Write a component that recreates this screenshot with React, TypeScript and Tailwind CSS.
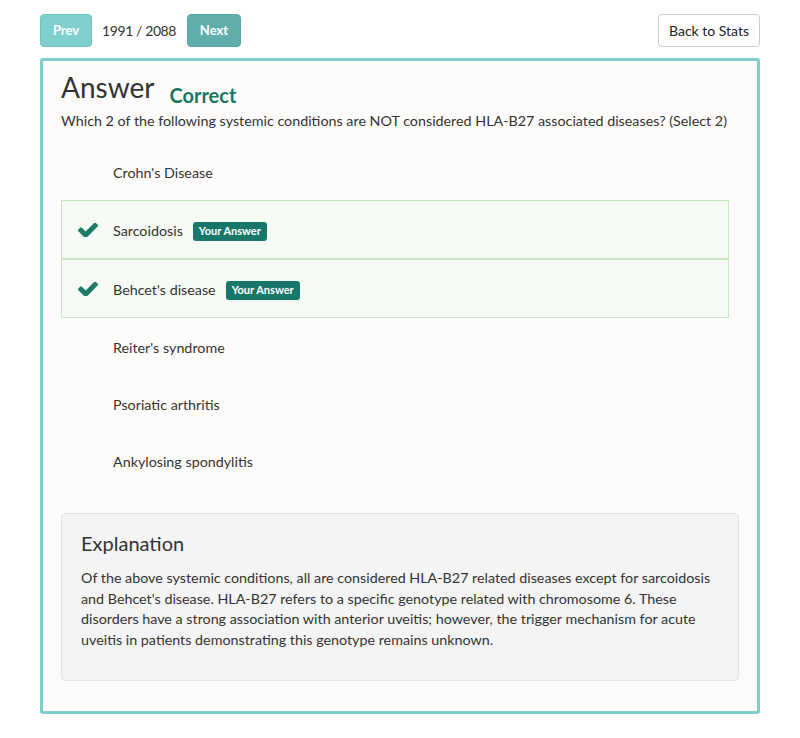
const options = [
  { text: "Crohn's Disease", picked: false },
  { text: 'Sarcoidosis', picked: true },
  { text: "Behcet's disease", picked: true },
  { text: "Reiter's syndrome", picked: false },
  { text: 'Psoriatic arthritis', picked: false },
  { text: 'Ankylosing spondylitis', picked: false },
];

function CheckMark() {
  return (
    <svg width="20" height="14" viewBox="121 374 1550 1052" className="fill-[#1d7a66]">
      <path d="M1671 566q0 40-28 68l-724 724-136 136q-28 28-68 28t-68-28l-136-136-362-362q-28-28-28-68t28-68l136-136q28-28 68-28t68 28l294 295 656-657q28-28 68-28t68 28l136 136q28 28 28 68z" />
    </svg>
  );
}

function OptionRow({ text, picked }: { text: string; picked: boolean }) {
  return (
    <div
      className={
        picked
          ? 'flex h-[59px] items-center border border-[#c9e6c3] bg-[#f5faf4]'
          : 'flex h-[57px] items-center border border-transparent'
      }
    >
      <div className="flex w-[51px] shrink-0 justify-start pl-[16px]">{picked && <CheckMark />}</div>
      <span className="pt-[3px] text-[14.3px] text-[#333]">{text}</span>
      {picked && (
        <span className="ml-[10px] mt-[3px] flex h-[19px] items-center rounded-[3px] bg-[#17786a] px-[6px] text-[11px] font-bold text-white">
          Your Answer
        </span>
      )}
    </div>
  );
}

export default function App() {
  return (
    <div
      className="min-h-[738px] bg-white px-[40px] pt-[14px] text-[#333]"
      style={{ fontFamily: 'Lato, "Open Sans", sans-serif' }}
    >
      <div className="flex h-[33px] items-center">
        <button className="h-[33px] w-[52px] rounded-[4px] border border-[#71c4c0] bg-[#7fd0cc] text-[13px] font-bold text-white">
          Prev
        </button>
        <span className="ml-[10px] mr-[10px] w-[75px] text-[14px] tracking-[-0.4px] text-[#333]">1991 / 2088</span>
        <button className="h-[33px] w-[54px] rounded-[4px] border border-[#58a6a2] bg-[#60aeaa] text-[13px] font-bold text-white">
          Next
        </button>
        <button className="ml-auto h-[33px] w-[102px] rounded-[4px] border border-[#cccccc] bg-white text-[14px] text-[#222]">
          Back to Stats
        </button>
      </div>

      <div className="mt-[11px] h-[656px] rounded-[3px] border-[3px] border-[#7ccfcb] bg-[#fdfcfa] px-[18px] pt-[8px]">
        <div className="flex items-end">
          <h1 className="text-[28px] leading-[36px] text-[#333]">Answer</h1>
          <span className="mb-[-4px] ml-[15px] text-[20px] font-bold leading-[28px] text-[#17775f]">
            Correct
          </span>
        </div>
        <p className="mt-[6px] text-[14.3px] leading-[20px] text-[#333]">
          Which 2 of the following systemic conditions are NOT considered HLA-B27 associated diseases? (Select 2)
        </p>

        <div className="mr-[10px] mt-[12px] flex flex-col">
          {options.map((o) => (
            <OptionRow key={o.text} text={o.text} picked={o.picked} />
          ))}
        </div>

        <div className="mt-[24px] h-[168px] rounded-[4px] border border-[#e3e3e3] bg-[#f4f4f4] px-[19px] pt-[15px]">
          <h2 className="text-[20px] leading-[28px] text-[#333]">Explanation</h2>
          <p className="mt-[11px] text-[14.3px] leading-[20.7px] text-[#333]">
            Of the above systemic conditions, all are considered HLA-B27 related diseases except for sarcoidosis
            and Behcet's disease. HLA-B27 refers to a specific genotype related with chromosome 6. These
            disorders have a strong association with anterior uveitis; however, the trigger mechanism for acute
            uveitis in patients demonstrating this genotype remains unknown.
          </p>
        </div>
      </div>
    </div>
  );
}
